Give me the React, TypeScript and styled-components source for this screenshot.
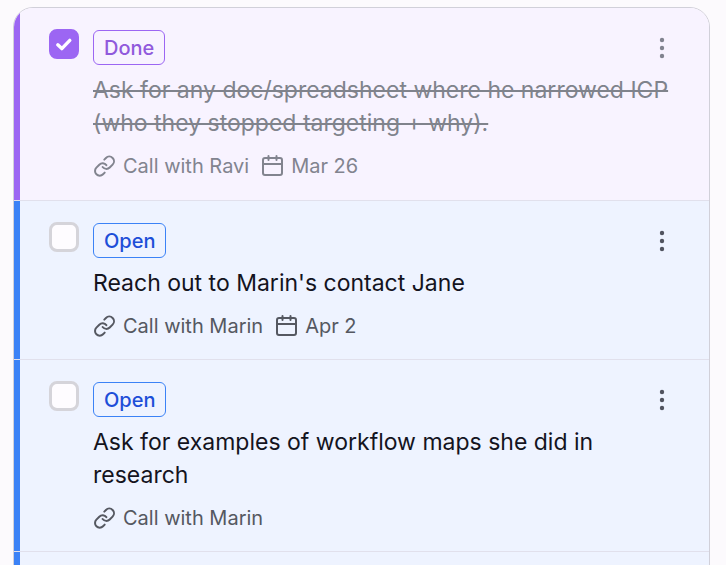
import React, { useState } from 'react';
import styled, { createGlobalStyle, css } from 'styled-components';

type Status = 'done' | 'open';

interface Task {
  id: string;
  status: Status;
  title: string;
  source: string;
  due?: string;
}

const tasks: Task[] = [
  {
    id: 'icp-doc',
    status: 'done',
    title: 'Ask for any doc/spreadsheet where he narrowed ICP (who they stopped targeting + why).',
    source: 'Call with Ravi',
    due: 'Mar 26',
  },
  { id: 'jane', status: 'open', title: "Reach out to Marin's contact Jane", source: 'Call with Marin', due: 'Apr 2' },
  {
    id: 'workflow-maps',
    status: 'open',
    title: 'Ask for examples of workflow maps she did in research',
    source: 'Call with Marin',
  },
];

const GlobalStyle = createGlobalStyle`
  *, *::before, *::after { box-sizing: border-box; }
  body {
    margin: 0;
    background: #fcfafd;
    color: #14141e;
    font-family: Inter, "Liberation Sans", sans-serif;
  }
`;

const Page = styled.main`
  height: 100vh;
  overflow: hidden;
  padding: 7px 16px 0 13px;
`;

const Card = styled.ul`
  list-style: none;
  margin: 0;
  padding: 0;
  min-height: 100vh;
  border: 1px solid #d1d0d9;
  border-radius: 20px;
  overflow: hidden;
`;

const Row = styled.li<{ $status: Status }>`
  display: flex;
  background: ${p => (p.$status === 'done' ? '#f8f3ff' : '#eef3ff')};
  border-bottom: 1px solid #e1e0ec;

  &::before {
    content: '';
    flex: none;
    width: 6px;
    background: ${p => (p.$status === 'done' ? '#9c66f3' : '#3b82f6')};
  }
`;

const RowInner = styled.div`
  flex: 1;
  min-width: 0;
  display: flex;
  align-items: flex-start;
  padding: 21px 32px 19px 29px;

  ${Row}:first-child & {
    padding-bottom: 20px;
  }
`;

const UpcomingRow = styled(Row).attrs({ 'aria-hidden': true })`
  height: 160px;
`;

const CheckBox = styled.span`
  flex: none;
  display: grid;
  width: 30px;
  height: 30px;
  margin-right: 14px;

  > * {
    grid-area: 1 / 1;
  }
`;

const CheckInput = styled.input`
  appearance: none;
  width: 100%;
  height: 100%;
  margin: 0;
  border: 3px solid #d5d4da;
  border-radius: 8px;
  background: #fefcff;
  cursor: pointer;

  &:checked {
    border-color: #9c66f3;
    background: #9c66f3;
  }
`;

const CheckMark = styled.svg`
  place-self: center;
  width: 20px;
  height: 20px;
  pointer-events: none;
`;

const Body = styled.div`
  flex: 1;
  min-width: 0;
  padding-top: 1px;
`;

const TopLine = styled.div`
  display: flex;
  align-items: center;
  justify-content: space-between;
  height: 35px;
`;

const Badge = styled.span<{ $status: Status }>`
  display: flex;
  align-items: center;
  height: 35px;
  padding: 0 10px;
  border: 1px solid;
  border-radius: 6px;
  font-size: 20px;
  font-weight: 500;
  ${p =>
    p.$status === 'done'
      ? css`
          border-color: #9c66f3;
          color: #9059dc;
        `
      : css`
          border-color: #3b82f6;
          color: #1d4ed8;
        `}
`;

const MenuButton = styled.button<{ $muted: boolean }>`
  display: grid;
  place-items: center;
  width: 30px;
  height: 30px;
  padding: 0;
  border: 0;
  background: none;
  color: ${p => (p.$muted ? '#81838f' : '#50535f')};
  cursor: pointer;
`;

const Title = styled.label<{ $done: boolean }>`
  display: block;
  margin-top: 9px;
  font-size: 23px;
  line-height: 33px;
  color: ${p => (p.$done ? '#80838c' : '#14141e')};
  text-decoration: ${p => (p.$done ? 'line-through' : 'none')};
`;

const Meta = styled.div<{ $muted: boolean }>`
  display: flex;
  align-items: center;
  gap: 12px;
  margin-top: 12px;
  font-size: 20px;
  line-height: 28px;
  color: ${p => (p.$muted ? '#82848f' : '#555861')};
`;

const MetaItem = styled.span`
  display: flex;
  align-items: center;
  gap: 6px;
`;

const Icon = styled.svg`
  flex: none;
  width: 24px;
  height: 24px;
  fill: none;
  stroke: currentColor;
  stroke-width: 2;
  stroke-linecap: round;
  stroke-linejoin: round;
`;

const LinkIcon = () => (
  <Icon viewBox="0 0 24 24" aria-hidden="true">
    <path d="M9.6 13a4.7 4.7 0 0 0 7.1.5l2.9-2.9a4.7 4.7 0 0 0-6.65-6.65l-1.65 1.65" />
    <path d="M13.4 11.2a4.7 4.7 0 0 0-7.1-.5l-2.9 2.9a4.7 4.7 0 0 0 6.65 6.65l1.65-1.65" />
  </Icon>
);

const CalendarIcon = () => (
  <Icon viewBox="0 0 24 24" aria-hidden="true">
    <rect x="2" y="4" width="19" height="17" rx="2" />
    <path d="M7.5 2v4M15.5 2v4M2 10h19" />
  </Icon>
);

const DotsIcon = () => (
  <svg width="6" height="22" viewBox="0 0 6 22" fill="currentColor" aria-hidden="true">
    <circle cx="3" cy="3" r="2.2" />
    <circle cx="3" cy="11" r="2.2" />
    <circle cx="3" cy="19" r="2.2" />
  </svg>
);

function TaskRow({ task }: { task: Task }) {
  const [checked, setChecked] = useState(task.status === 'done');
  const status: Status = checked ? 'done' : 'open';
  return (
    <Row $status={status}>
      <RowInner>
        <CheckBox>
          <CheckInput id={task.id} type="checkbox" checked={checked} onChange={e => setChecked(e.target.checked)} />
          {checked && (
            <CheckMark viewBox="0 0 20 20" aria-hidden="true">
              <path
                d="M3.8 10.8 7.8 14.6 15.8 6.4"
                fill="none"
                stroke="#fff"
                strokeWidth="3.4"
                strokeLinecap="round"
                strokeLinejoin="round"
              />
            </CheckMark>
          )}
        </CheckBox>
        <Body>
          <TopLine>
            <Badge $status={status}>{checked ? 'Done' : 'Open'}</Badge>
            <MenuButton type="button" aria-label="Task options" $muted={checked}>
              <DotsIcon />
            </MenuButton>
          </TopLine>
          <Title htmlFor={task.id} $done={checked}>
            {task.title}
          </Title>
          <Meta $muted={checked}>
            <MetaItem>
              <LinkIcon />
              {task.source}
            </MetaItem>
            {task.due && (
              <MetaItem>
                <CalendarIcon />
                {task.due}
              </MetaItem>
            )}
          </Meta>
        </Body>
      </RowInner>
    </Row>
  );
}

export default function App() {
  return (
    <>
      <GlobalStyle />
      <Page>
        <Card>
          {tasks.map(task => (
            <TaskRow key={task.id} task={task} />
          ))}
          <UpcomingRow $status="open" />
        </Card>
      </Page>
    </>
  );
}
